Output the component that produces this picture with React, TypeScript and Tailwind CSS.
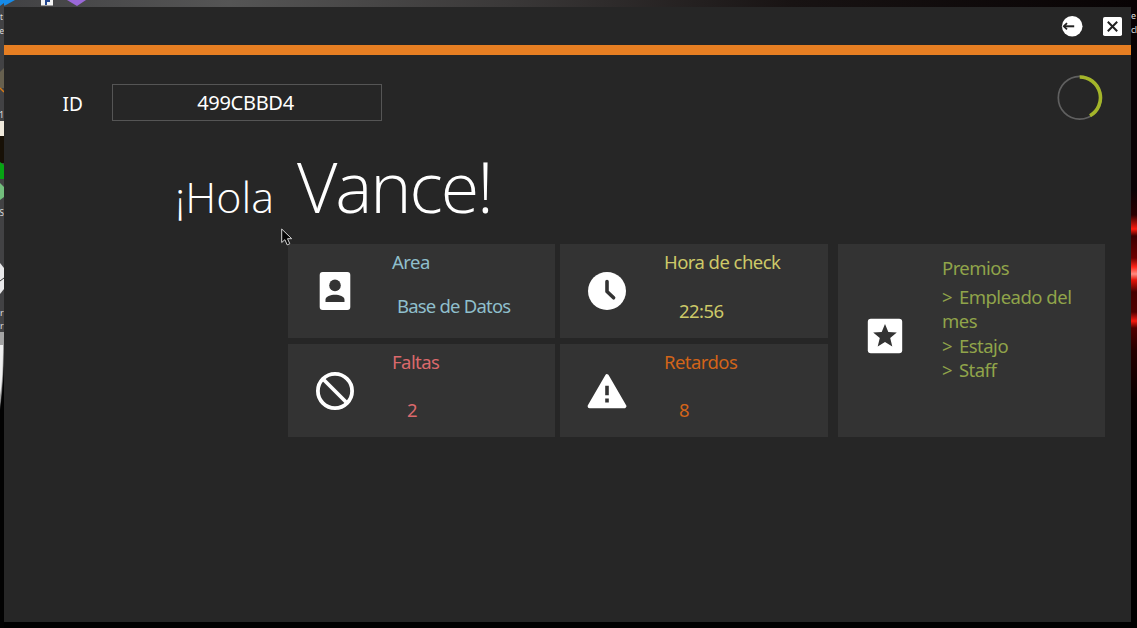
import type { ReactNode } from "react";

function BackIcon() {
  return (
    <svg className="h-[22px] w-[22px]" viewBox="0 0 22 22" fill="none">
      <circle cx="11.2" cy="11.3" r="10.3" fill="#fff" />
      <path d="M3 11.300H13.200" stroke="#202020" strokeWidth="2" />
      <path d="M6 8.200 2.800 11.300 6 14.400" stroke="#202020" strokeWidth="1.800" />
    </svg>
  );
}

function CloseIcon() {
  return (
    <svg className="h-[19px] w-[19px]" viewBox="0 0 19 19" fill="none">
      <rect width="19" height="19" rx="1.8" fill="#fff" />
      <path d="M4.8 4.8l9.4 9.4M14.2 4.8l-9.4 9.4" stroke="#202020" strokeWidth="2" />
    </svg>
  );
}

function Spinner() {
  return (
    <svg className="h-[46px] w-[46px]" viewBox="0 0 46 46" fill="none">
      <circle cx="22.7" cy="22.7" r="21.4" stroke="#606060" strokeWidth="1.7" />
      <path d="M22.700 2A20.700 20.700 0 0 1 33 40.700" stroke="#a4b52a" strokeWidth="3.600" />
    </svg>
  );
}

function PortraitIcon() {
  return (
    <svg className="h-10 w-10" viewBox="0 0 40 40">
      <rect x="4.700" y="1" width="30.600" height="38" rx="3" fill="#fff" />
      <circle cx="20" cy="14.400" r="5.800" fill="#333" />
      <path d="M10.500 31v-2.200c0-3.200 5.200-5 9.500-5s9.500 1.800 9.500 5V31z" fill="#333" />
    </svg>
  );
}

function BlockIcon() {
  return (
    <svg className="h-10 w-10" viewBox="0 0 40 40" fill="none" stroke="#fff" strokeWidth="3.8">
      <circle cx="20" cy="20" r="17.100" />
      <path d="M8 8l24 24" />
    </svg>
  );
}

function ClockIcon() {
  return (
    <svg className="h-10 w-10" viewBox="0 0 40 40" fill="none">
      <circle cx="20" cy="20" r="19" fill="#fff" />
      <path d="M20 10.500V20.500l6.600 6.300" stroke="#333" strokeWidth="3.600" strokeLinecap="round" strokeLinejoin="round" />
    </svg>
  );
}

function WarningIcon() {
  return (
    <svg className="h-10 w-10" viewBox="0 0 40 40">
      <path
        d="M20 5.200L37.400 35.200H2.600z"
        fill="#fff"
        stroke="#fff"
        strokeWidth="4"
        strokeLinejoin="round"
      />
      <path d="M18.200 14.800h3.600v9.400h-3.600zM18.200 27.600h3.600v4h-3.600z" fill="#333" />
    </svg>
  );
}

function StarIcon() {
  return (
    <svg className="h-10 w-10" viewBox="0 0 40 40">
      <rect x="2.800" y="2.800" width="34.400" height="34.400" rx="3" fill="#fff" />
      <path
        d="M20 8l3.300 8 8.500.6-6.600 5.500 2.100 8.400L20 26l-7.300 4.500 2.100-8.400-6.600-5.500 8.500-.6z"
        fill="#333"
      />
    </svg>
  );
}

type CardProps = {
  icon: ReactNode;
  title: string;
  color: string;
  children: ReactNode;
};

function Card({ icon, title, color, children }: CardProps) {
  return (
    <section className={`flex bg-[#333333] ${color}`}>
      <div className="flex w-[93px] shrink-0 items-center justify-center">{icon}</div>
      <div className="flex flex-col pt-[5px] pl-[11px]">
        <h2>{title}</h2>
        {children}
      </div>
    </section>
  );
}

function DesktopLeft() {
  return (
    <svg className="block h-[628px] w-1 shrink-0" viewBox="0 0 4 628">
      <rect width="4" height="628" fill="#424244" />
      <path d="M0 0h4v3l-4 3z" fill="#168be8" />
      <path d="M0 72l4-4v20H0z" fill="#66604f" />
      <path d="M0 88l4 4" stroke="#d97a12" strokeWidth="1.500" />
      <rect y="121" width="4" height="15" fill="#efe9dc" />
      <rect y="136" width="4" height="27" fill="#171006" />
      <path d="M0 162l4 3v14H0z" fill="#07a414" />
      <path d="M0 183l4 4v10l-4 3z" fill="#72bd7c" />
      <path d="M0 263l4 5v21l-4 5z" fill="#e8e8ea" />
      <path d="M0 281l4-3" stroke="#333" />
      <path d="M0 332h4c0 30-1 50-4 75z" fill="#a4a4a4" />
      <path d="M0 345h3c0 22-1 40-3 50z" fill="#f0f0f0" />
      <path d="M4 350v278H0V410c3-20 4-40 4-60z" fill="#020202" />
      <g fill="#ddd" fontFamily="Noto Sans" fontSize="9">
        <text x="0" y="20" fontSize="8">t</text>
        <text x="-0.500" y="34" fontSize="8">e</text>
        <text x="-1" y="118">1</text>
        <text x="-0.500" y="216" fontSize="8">S</text>
        <text x="0" y="316">r</text>
        <text x="0" y="329">r</text>
      </g>
    </svg>
  );
}

function DesktopRight() {
  return (
    <div className="w-[6px] shrink-0 overflow-hidden bg-[linear-gradient(to_bottom,#090204_0px,#090204_190px,#2a0000_215px,#ff1b0c_229px,#3a0000_236px,#6c0000_258px,#ff2418_267px,#ff8a80_274px,#e31208_280px,#450000_292px,#500000_312px,#f81a10_321px,#500000_328px,#250000_350px,#070000_400px,#000_440px)] pt-[9px] font-['Noto_Sans'] text-[9px] leading-[14px] text-[#ddd]">
      <div className="tracking-[-0.500px]">e</div>
      <div className="tracking-[-0.500px]">cl</div>
    </div>
  );
}

export default function App() {
  return (
    <div className="relative flex h-[628px] w-[1137px] flex-col overflow-hidden bg-black font-['Noto_Sans',sans-serif]">
      <div className="flex h-full">
        <DesktopLeft />
        <div className="flex w-[1127px] flex-col">
          <div className="h-[7px] shrink-0 bg-[linear-gradient(to_right,#424244,#555_20%,#3a3838_45%,#181313_70%,#080304)]">
            <svg className="block h-[7px] w-[90px]" viewBox="0 0 90 7">
              <path d="M0 0h11L1 5.500H0z" fill="#168be8" />
              <path d="M37 0h12v5.500H37z" fill="#f3f3f3" />
              <path d="M41 0h5v2h-3v3h-2z" fill="#24478f" />
              <path d="M63 0h19l-9 6z" fill="#9a68d8" />
            </svg>
          </div>
          <main className="flex h-[615px] shrink-0 flex-col bg-[#262626]">
            <header className="flex h-[38px] shrink-0 items-center justify-end gap-[20px] pr-[9px]">
              <button aria-label="Regresar"><BackIcon /></button>
              <button aria-label="Cerrar"><CloseIcon /></button>
            </header>
            <div className="h-[10px] shrink-0 bg-[#e67e22]" />
            <div className="flex h-[84px] shrink-0 items-start pt-[20px] pr-[28px]">
              <div className="flex items-center pt-[9px] pl-[58.500px] text-white">
                <label className="w-[49.500px] pt-[3px] text-[19px] leading-[34px]">ID</label>
                <div className="h-[37px] w-[270px] border border-[#555555] pr-[3px] text-center text-[20px] leading-[35px] tracking-[-0.300px]">
                  499CBBD4
                </div>
              </div>
              <div className="ml-auto"><Spinner /></div>
            </div>
            <h1 className="flex h-[105px] shrink-0 items-baseline pl-[171px] font-['Open_Sans',sans-serif] font-light text-white">
              <span className="w-[122px] text-[43px] leading-[94px]">¡Hola</span>
              <span className="text-[70px] leading-[94px] tracking-[-2.100px]">Vance!</span>
            </h1>
            <div className="flex gap-[10px] pl-[284px] text-[18.500px] leading-[25px] tracking-[-0.550px]">
              <div className="grid grid-cols-[267px_268px] grid-rows-[94px_93px] gap-x-[5px] gap-y-[6px]">
                <Card icon={<PortraitIcon />} title="Area" color="text-[#8fbfcc]">
                  <p className="pt-[19px] pl-[5px] tracking-[-0.800px] whitespace-nowrap">Base de Datos</p>
                </Card>
                <Card icon={<ClockIcon />} title="Hora de check" color="text-[#cdc968]">
                  <p className="pt-[24px] pl-[15px]">22:56</p>
                </Card>
                <Card icon={<BlockIcon />} title="Faltas" color="text-[#db696c]">
                  <p className="pt-[23px] pl-[15px]">2</p>
                </Card>
                <Card icon={<WarningIcon />} title="Retardos" color="text-[#d26419]">
                  <p className="pt-[23px] pl-[15px]">8</p>
                </Card>
              </div>
              <section className="flex h-[193px] w-[267px] bg-[#333333] text-[#90a44a]">
                <div className="flex w-[93px] shrink-0 items-center justify-center pb-[9px]">
                  <StarIcon />
                </div>
                <div className="w-[150px] pt-[11px] pl-[11px]">
                  <h2>Premios</h2>
                  <ul className="pt-[5px] leading-[24.400px] tracking-[-0.500px]">
                    <li><span className="mr-[2.500px]">&gt;</span> Empleado del mes</li>
                    <li><span className="mr-[2.500px]">&gt;</span> Estajo</li>
                    <li><span className="mr-[2.500px]">&gt;</span> Staff</li>
                  </ul>
                </div>
              </section>
            </div>
          </main>
        </div>
        <DesktopRight />
      </div>
      <svg className="absolute top-[228px] left-[281px] h-[18px] w-[12px]" viewBox="0 0 12 18">
        <path d="M.7 1v13.500l3.200-2.800 2.300 5.200 2.600-1.200-2.300-5h4.200z" fill="#050505" stroke="#d5d5d5" />
      </svg>
    </div>
  );
}
